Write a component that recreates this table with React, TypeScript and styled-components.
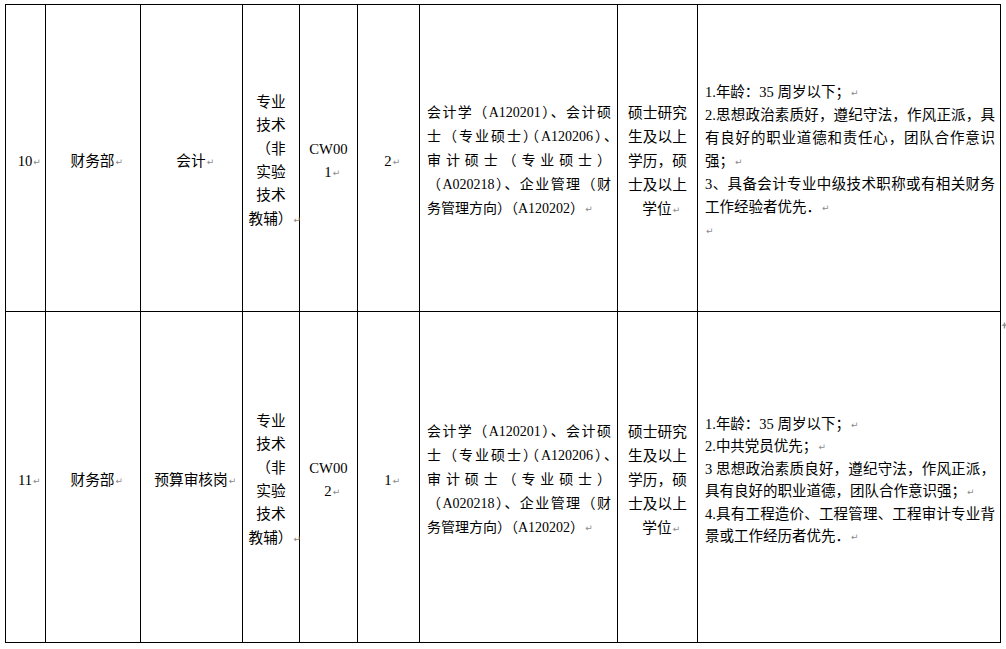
import React from 'react';
import styled, { createGlobalStyle } from 'styled-components';

const GlobalStyle = createGlobalStyle`
  html, body { margin: 0; padding: 0; background: #fff; }
  body {
    font-family: "Liberation Serif", "Noto Sans CJK SC", serif;
    color: #000;
  }
`;

const Page = styled.div`
  display: flex;
  align-items: flex-start;
  padding: 4px 0 0 5px;
  width: 1006px;
  box-sizing: border-box;
`;

const Table = styled.div`
  display: grid;
  grid-template-columns: 39px 94px 101px 56px 57px 61px 197px 79px 302px;
  grid-template-rows: 306px 330px;
  gap: 1px;
  padding: 1px;
  background: #000;
`;

type Align = 'center' | 'start';

const Cell = styled.div<{ $align: Align; $size: number; $lh: number; $pl: number; $pr: number }>`
  background: #fff;
  display: flex;
  flex-direction: column;
  justify-content: center;
  align-items: ${(p) => (p.$align === 'center' ? 'center' : 'stretch')};
  padding: 6px ${(p) => p.$pr}px 0 ${(p) => p.$pl}px;
  font-size: ${(p) => p.$size}px;
  line-height: ${(p) => p.$lh}px;
  min-width: 0;
`;

const Line = styled.div<{ $justify?: boolean }>`
  white-space: ${(p) => (p.$justify ? 'normal' : 'nowrap')};
  text-align: ${(p) => (p.$justify ? 'justify' : 'left')};
  text-align-last: ${(p) => (p.$justify ? 'justify' : 'auto')};
`;

const Mark = styled.span`
  display: inline-block;
  width: 0;
  overflow: visible;
  white-space: nowrap;
  font-family: "DejaVu Sans", sans-serif;
  font-size: 9px;
  line-height: 1;
  color: #8a8a8a;
  padding-left: 1px;
  vertical-align: 1px;
`;

const Trim = styled.span`
  letter-spacing: -0.5em;
`;

const RowEnds = styled.div`
  display: flex;
  flex-direction: column;
  padding-top: 318px;
  margin-left: 1px;
`;

const RowEndMark = () => (
  <svg width="5" height="7" viewBox="0 0 5 7">
    <path d="M2.5 0.5V6.5M0.3 3.3H4.7" stroke="#8f8f8f" strokeWidth="1.4" />
  </svg>
);

type LineSpec = { t: React.ReactNode; j?: boolean; m?: boolean };
type CellSpec = {
  lines: LineSpec[];
  align: Align;
  size: number;
  lh: number;
  pl: number;
  pr: number;
};

const simple = (t: string): CellSpec => ({
  lines: [{ t, m: true }],
  align: 'center',
  size: 14.7,
  lh: 23,
  pl: 2,
  pr: 2,
});

const typeCell: CellSpec = {
  lines: [
    { t: '专业' },
    { t: '技术' },
    { t: '（非' },
    { t: '实验' },
    { t: '技术' },
    { t: '教辅）', m: true },
  ],
  align: 'center',
  size: 14.7,
  lh: 23.4,
  pl: 0,
  pr: 0,
};

const codeCell = (n: string): CellSpec => ({
  lines: [{ t: 'CW00' }, { t: n, m: true }],
  align: 'center',
  size: 14.7,
  lh: 23,
  pl: 0,
  pr: 0,
});

const majorCell: CellSpec = {
  lines: [
    { t: '会计学（A120201）、会计硕', j: true },
    {
      t: (
        <>
          士（专业硕士<Trim>）</Trim>（A120206）<Trim>、</Trim>
        </>
      ),
      j: true,
    },
    { t: '审计硕士（专业硕士）', j: true },
    { t: '（A020218）、企业管理（财', j: true },
    { t: '务管理方向）（A120202）', m: true },
  ],
  align: 'start',
  size: 14,
  lh: 24,
  pl: 7,
  pr: 6,
};

const degreeCell: CellSpec = {
  lines: [
    { t: '硕士研究' },
    { t: '生及以上' },
    { t: '学历，硕' },
    { t: '士及以上' },
    { t: '学位', m: true },
  ],
  align: 'center',
  size: 14.7,
  lh: 24,
  pl: 0,
  pr: 0,
};

const req1: CellSpec = {
  lines: [
    { t: '1.年龄：35 周岁以下；', m: true },
    { t: '2.思想政治素质好，遵纪守法，作风正派，具', j: true },
    { t: '有良好的职业道德和责任心，团队合作意识', j: true },
    { t: '强；', m: true },
    { t: '3、具备会计专业中级技术职称或有相关财务', j: true },
    { t: '工作经验者优先．', m: true },
    { t: '', m: true },
  ],
  align: 'start',
  size: 14.5,
  lh: 23,
  pl: 7,
  pr: 5,
};

const req2: CellSpec = {
  lines: [
    { t: '1.年龄：35  周岁以下；', m: true },
    { t: '2.中共党员优先；', m: true },
    { t: '3 思想政治素质良好，遵纪守法，作风正派，', j: true },
    { t: '具有良好的职业道德，团队合作意识强；', m: true },
    { t: '4.具有工程造价、工程管理、工程审计专业背', j: true },
    { t: '景或工作经历者优先．', m: true },
  ],
  align: 'start',
  size: 14.5,
  lh: 22.5,
  pl: 7,
  pr: 5,
};

const rows: CellSpec[][] = [
  [simple('10'), simple('财务部'), simple('会计'), typeCell, codeCell('1'), simple('2'), majorCell, degreeCell, req1],
  [simple('11'), simple('财务部'), simple('预算审核岗'), typeCell, codeCell('2'), simple('1'), majorCell, degreeCell, req2],
];

export default function App() {
  return (
    <>
      <GlobalStyle />
      <Page>
        <Table>
          {rows.map((row, ri) =>
            row.map((c, ci) => (
              <Cell key={`${ri}-${ci}`} $align={c.align} $size={c.size} $lh={c.lh} $pl={c.pl} $pr={c.pr}>
                {c.lines.map((l, li) => (
                  <Line key={li} $justify={l.j}>
                    {l.t}
                    {l.m && <Mark>↵</Mark>}
                  </Line>
                ))}
              </Cell>
            ))
          )}
        </Table>
        <RowEnds>
          <RowEndMark />
        </RowEnds>
      </Page>
    </>
  );
}
